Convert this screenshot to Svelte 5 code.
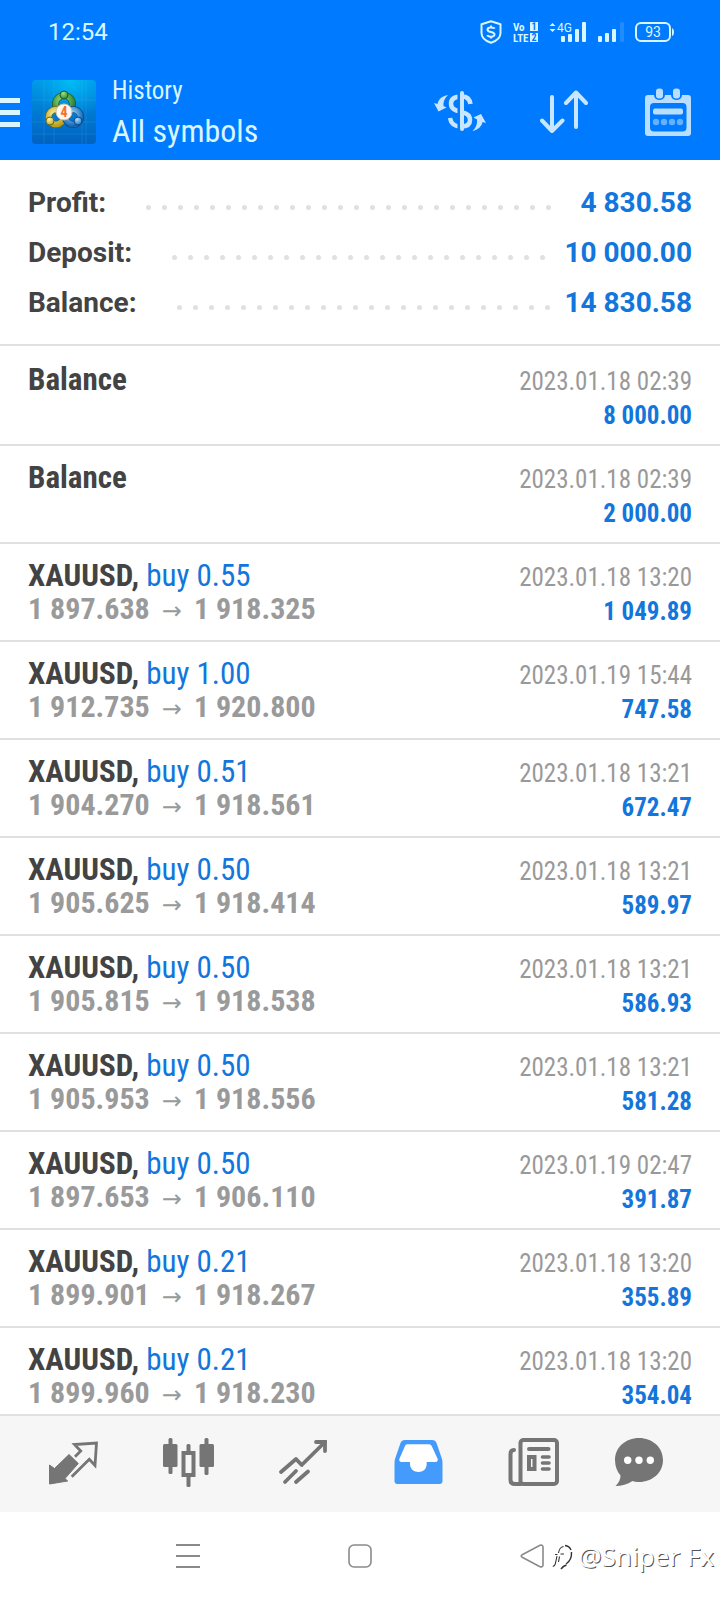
<script lang="ts">
  type Deal = {
    symbol?: string;
    side?: string;
    open?: string;
    close?: string;
    time: string;
    profit: string;
  };

  const summary = [
    { label: 'Profit:', value: '4 830.58' },
    { label: 'Deposit:', value: '10 000.00' },
    { label: 'Balance:', value: '14 830.58' },
  ];

  const deals: Deal[] = [
    { time: '2023.01.18 02:39', profit: '8 000.00' },
    { time: '2023.01.18 02:39', profit: '2 000.00' },
    { symbol: 'XAUUSD', side: 'buy 0.55', open: '1 897.638', close: '1 918.325', time: '2023.01.18 13:20', profit: '1 049.89' },
    { symbol: 'XAUUSD', side: 'buy 1.00', open: '1 912.735', close: '1 920.800', time: '2023.01.19 15:44', profit: '747.58' },
    { symbol: 'XAUUSD', side: 'buy 0.51', open: '1 904.270', close: '1 918.561', time: '2023.01.18 13:21', profit: '672.47' },
    { symbol: 'XAUUSD', side: 'buy 0.50', open: '1 905.625', close: '1 918.414', time: '2023.01.18 13:21', profit: '589.97' },
    { symbol: 'XAUUSD', side: 'buy 0.50', open: '1 905.815', close: '1 918.538', time: '2023.01.18 13:21', profit: '586.93' },
    { symbol: 'XAUUSD', side: 'buy 0.50', open: '1 905.953', close: '1 918.556', time: '2023.01.18 13:21', profit: '581.28' },
    { symbol: 'XAUUSD', side: 'buy 0.50', open: '1 897.653', close: '1 906.110', time: '2023.01.19 02:47', profit: '391.87' },
    { symbol: 'XAUUSD', side: 'buy 0.21', open: '1 899.901', close: '1 918.267', time: '2023.01.18 13:20', profit: '355.89' },
    { symbol: 'XAUUSD', side: 'buy 0.21', open: '1 899.960', close: '1 918.230', time: '2023.01.18 13:20', profit: '354.04' },
  ];

  // more than any row can hold; the extra ones wrap out of sight
  const dots = Array(60);
</script>

<div class="app">
  <header>
    <div class="status">
      <span class="clock">12:54</span>
      <div class="indicators">
        <svg width="22" height="24" viewBox="0 0 22 24">
          <path d="M11 1.2 L20.5 4.2 V13 C20.5 18 16.5 21 11 22.8 C5.5 21 1.5 18 1.5 13 V4.2 Z" fill="none" stroke="#d9f6ff" stroke-width="2" stroke-linejoin="round" />
          <path d="M14.5 8.8 C14 7.3 7.5 6.5 7.5 9.7 C7.5 12.7 14.5 11.3 14.5 14.5 C14.5 17.6 7.8 17 7.3 15 M11 5.5 V7.5 M11 16.5 V18.5" fill="none" stroke="#d9f6ff" stroke-width="2" />
        </svg>
        <svg class="volte" width="25" height="24" viewBox="0 0 25 24">
          <text x="0" y="11">Vo</text>
          <text x="0" y="22">LTE</text>
          <rect x="17" y="2" width="8" height="9" />
          <rect x="17" y="13" width="8" height="9" />
          <text class="cut" x="21" y="10" text-anchor="middle">1</text>
          <text class="cut" x="21" y="21" text-anchor="middle">2</text>
        </svg>
        <svg width="38" height="22" viewBox="0 0 38 22" fill="#d9f6ff">
          <path d="M0.5 5 L3.5 2 L6.5 5 Z M0.5 8 L3.5 11 L6.5 8 Z" />
          <text class="net" x="8" y="11">4G</text>
          <rect x="12" y="15" width="4" height="6" rx="1" />
          <rect x="19" y="13" width="4" height="8" rx="1" />
          <rect x="26" y="8" width="4" height="13" rx="1" />
          <rect x="33" y="1" width="4" height="20" rx="1" />
        </svg>
        <svg width="26" height="22" viewBox="0 0 26 22" fill="#d9f6ff">
          <rect x="0" y="15" width="4" height="6" rx="1" />
          <rect x="7" y="12" width="4" height="9" rx="1" />
          <rect x="14" y="8" width="4" height="13" rx="1" />
          <rect x="22" y="1" width="4" height="20" rx="1" opacity="0.15" />
        </svg>
        <svg width="39" height="22" viewBox="0 0 39 22">
          <rect x="1" y="2" width="34" height="18" rx="5" fill="none" stroke="#d9f6ff" stroke-width="2" />
          <path d="M37 7 Q39 8 39 11 Q39 14 37 15 Z" fill="#d9f6ff" />
          <text class="charge" x="18" y="16" text-anchor="middle">93</text>
        </svg>
      </div>
    </div>
    <div class="bar">
      <button class="menu" aria-label="Menu"><i></i><i></i><i></i></button>
      <svg class="logo" width="64" height="64" viewBox="0 0 64 64">
        <defs>
          <linearGradient id="sky" x1="0" y1="0" x2="0" y2="1">
            <stop offset="0" stop-color="#009be8" />
            <stop offset="0.5" stop-color="#007bd2" />
            <stop offset="1" stop-color="#0062c0" />
          </linearGradient>
          <radialGradient id="glow" cx="0.6" cy="0" r="0.6">
            <stop offset="0" stop-color="#00bff5" />
            <stop offset="1" stop-color="#00a0ec" stop-opacity="0" />
          </radialGradient>
          <radialGradient id="green" cx="0.4" cy="0.3" r="0.8">
            <stop offset="0" stop-color="#a5e07a" />
            <stop offset="1" stop-color="#1e7c33" />
          </radialGradient>
          <radialGradient id="yellow" cx="0.4" cy="0.3" r="0.8">
            <stop offset="0" stop-color="#fff3a0" />
            <stop offset="1" stop-color="#b8a01c" />
          </radialGradient>
          <radialGradient id="blue" cx="0.4" cy="0.3" r="0.8">
            <stop offset="0" stop-color="#a8ddff" />
            <stop offset="1" stop-color="#1467b4" />
          </radialGradient>
        </defs>
        <rect width="64" height="64" rx="4" fill="url(#sky)" />
        <rect width="64" height="64" rx="4" fill="url(#glow)" />
        <path d="M12 0 V64 M22 0 V64 M50 0 V64 M54 0 V64 M0 20 H64 M0 42 H64 M0 54 H64" stroke="#5fc4f5" stroke-opacity="0.18" />
        <g fill="none">
          <circle cx="32" cy="24" r="8.5" stroke="#17602f" stroke-width="7" />
          <circle cx="32" cy="24" r="8.5" stroke="url(#green)" stroke-width="5.5" />
          <circle cx="24" cy="37" r="7.5" stroke="#6b6a20" stroke-width="7" />
          <circle cx="24" cy="37" r="7.5" stroke="url(#yellow)" stroke-width="5.5" />
          <circle cx="41" cy="37" r="7.5" stroke="#0b4b8c" stroke-width="7" />
          <circle cx="41" cy="37" r="7.5" stroke="url(#blue)" stroke-width="5.5" />
        </g>
        <circle cx="32" cy="15" r="4" fill="url(#green)" stroke="#17602f" />
        <circle cx="18" cy="41" r="4" fill="url(#yellow)" stroke="#6b6a20" />
        <circle cx="46" cy="41" r="4" fill="url(#blue)" stroke="#0b4b8c" />
        <circle cx="32" cy="32" r="8" fill="#fff6ee" stroke="#c9c2a8" />
        <text class="four" x="32" y="37" text-anchor="middle">4</text>
      </svg>
      <div class="title">
        <span>History</span>
        <h1>All symbols</h1>
      </div>
      <div class="actions">
        <button aria-label="Symbols">
          <svg width="52" height="44" viewBox="0 0 52 44" fill="#c8e6ff">
            <path d="M36.5 14 C35.5 8 32 6.5 28 6.5 C20.5 6.5 17 9 17 13.5 C17 19.5 22 20.5 27 22 C33 23.5 36 25 36 30 C36 35 32 36.5 27 36.5 C21 36.5 17 34 16 28" fill="none" stroke="#c8e6ff" stroke-width="4.5" />
            <rect x="23.5" y="2" width="3" height="38" fill="#007aff" />
            <rect x="26" y="1" width="4" height="40" rx="2" />
            <path d="M0 13 L4.5 21.5 L12.5 17.5 L9.5 16 C9 12 10.5 8 14 5 C8 6 4.5 9 3.5 14 Z" />
            <path d="M39.5 27.5 L47 24 L52 33 L48.5 32 C48 36 44 40 38.5 41 C42 38 43.5 34 43 29.5 Z" />
          </svg>
        </button>
        <button aria-label="Sort">
          <svg width="48" height="44" viewBox="0 0 48 44" fill="none" stroke="#c8e6ff" stroke-width="4" stroke-linecap="round" stroke-linejoin="round">
            <path d="M12 7 V41 M2 30.5 L12 41 L22.5 30.5" />
            <path d="M36 37 V2.5 M26 13 L36 2.5 L46 13" />
          </svg>
        </button>
        <button aria-label="Period">
          <svg width="46" height="48" viewBox="0 0 46 48" fill="#b9deff">
            <rect x="0" y="7" width="46" height="41" rx="3" />
            <rect x="5" y="15" width="36.5" height="28.5" rx="4" fill="#007aff" />
            <rect x="9" y="-2" width="11" height="14" rx="5" fill="#007aff" />
            <rect x="26" y="-2" width="11" height="14" rx="5" fill="#007aff" />
            <rect x="11" y="0.5" width="7" height="10" rx="3" />
            <rect x="28" y="0.5" width="7" height="10" rx="3" />
            <rect x="8" y="20.5" width="30" height="6" rx="2" />
            <g opacity="0.55">
              <circle cx="11" cy="34" r="3.2" />
              <circle cx="19" cy="34" r="3.2" />
              <circle cx="27" cy="34" r="3.2" />
              <circle cx="35" cy="34" r="3.2" />
            </g>
          </svg>
        </button>
      </div>
    </div>
  </header>

  <main>
    <dl class="summary">
      {#each summary as row}
        <div>
          <dt>{row.label}</dt>
          <span class="dots" aria-hidden="true">{#each dots as _}<i></i>{/each}</span>
          <dd>{row.value}</dd>
        </div>
      {/each}
    </dl>

    <ul class="deals">
      {#each deals as deal}
        <li>
          <div class="left">
            {#if deal.symbol}
              <div class="name">{deal.symbol}, <span>{deal.side}</span></div>
              <div class="prices">{deal.open}<span class="arrow">→</span>{deal.close}</div>
            {:else}
              <div class="name">Balance</div>
            {/if}
          </div>
          <div class="right">
            <time>{deal.time}</time>
            <div class="profit">{deal.profit}</div>
          </div>
        </li>
      {/each}
    </ul>
  </main>

  <nav class="tabs">
    <button aria-label="Quotes">
      <svg width="52" height="52" viewBox="0 0 52 52">
        <path d="M2.5 27 L2.5 46 L20.7 43 L18 40.5 L31.3 25.5 L22 16.5 L7.5 30.5 Z" fill="#757575" stroke="#757575" stroke-linejoin="round" />
        <path d="M28 18.7 L33.7 13 L27.5 6.5 L49.5 5 L48 27.5 L42.3 21.3 L24.7 38.7" fill="none" stroke="#757575" stroke-width="2.8" />
      </svg>
    </button>
    <button aria-label="Charts">
      <svg width="52" height="52" viewBox="0 0 52 52" fill="#757575">
        <rect x="1" y="6" width="14.5" height="23" rx="1.5" />
        <rect x="6.5" y="0" width="4" height="36" rx="1.5" />
        <rect x="21.5" y="15" width="10" height="22" fill="none" stroke="#757575" stroke-width="4" />
        <rect x="24.5" y="6" width="4" height="9" rx="1.5" />
        <rect x="24.5" y="38" width="4" height="11" rx="1.5" />
        <rect x="37.5" y="6" width="14.5" height="23" rx="1.5" />
        <rect x="42.5" y="0" width="4" height="37" rx="1.5" />
      </svg>
    </button>
    <button aria-label="Trade">
      <svg width="52" height="52" viewBox="0 0 52 52" fill="none" stroke="#757575" stroke-width="3.8" stroke-linecap="round">
        <path d="M4 34 L19 21 L24.7 27 L48 4" stroke-linejoin="round" />
        <path d="M39 4 H48 V13" />
        <path d="M8 44 L19 33 M19 44 L31 33.5" />
      </svg>
    </button>
    <button aria-label="History">
      <svg width="52" height="52" viewBox="0 0 52 52">
        <path d="M13 2 H40 Q43.5 2 44.5 5 L50 21 Q50.5 23 50.5 25 V43 Q50.5 46 47.5 46 H5.5 Q2.5 46 2.5 43 V25 Q2.5 23 3 21 L8.5 5 Q9.5 2 13 2 Z" fill="#459bfb" />
        <path d="M15 6.3 H37 Q39 6.3 39.7 8 L45.7 21 Q46 24 43.5 24 H34.7 V26 C34.7 31 31 34 26.4 34 C22 34 18 31 18 26 V24 H9.5 Q7 24 7.3 21 L13 8 Q13.5 6.3 15 6.3 Z" fill="#fff" />
      </svg>
    </button>
    <button aria-label="News">
      <svg width="52" height="52" viewBox="0 0 52 52" fill="none" stroke="#757575" stroke-width="4" stroke-linecap="round">
        <rect x="13.5" y="2" width="36.5" height="44" rx="3" />
        <path d="M7 12 Q3.5 12 3.5 16 V42 Q3.5 46 8 46 H14" />
        <path d="M22 11 H41.5" />
        <rect x="22" y="19" width="5.5" height="12" />
        <path d="M35.5 19 H42 M35.5 25 H42 M35.5 31 H42" stroke-width="3.6" />
      </svg>
    </button>
    <button aria-label="Messages">
      <svg width="52" height="52" viewBox="0 0 52 52">
        <path d="M26 0 C39.5 0 50 9.5 50 22 C50 34.5 39.5 44 26 44 C23.5 44 21.5 43.6 19.5 43 C14.5 46.5 8.5 48 2.5 48 C6 45 7.5 41 7.5 37.5 C4 33.5 2 28 2 22 C2 9.5 12.5 0 26 0 Z" fill="#757575" />
        <g fill="#fff">
          <circle cx="14.7" cy="22.3" r="3.7" />
          <circle cx="26" cy="22.3" r="3.7" />
          <circle cx="37.3" cy="22.3" r="3.7" />
        </g>
      </svg>
    </button>
  </nav>

  <footer>
    <button aria-label="Recent apps">
      <svg width="26" height="26" viewBox="0 0 26 26" stroke="#8a8a8a" stroke-width="2">
        <path d="M1 2 H25 M1 13 H25 M1 24 H25" />
      </svg>
    </button>
    <button aria-label="Home">
      <svg width="26" height="26" viewBox="0 0 26 26" fill="none" stroke="#8a8a8a" stroke-width="1.6">
        <rect x="2" y="2" width="22" height="22" rx="5" />
      </svg>
    </button>
    <button aria-label="Back">
      <svg width="26" height="26" viewBox="0 0 26 26" fill="none" stroke="#8a8a8a" stroke-width="1.6">
        <path d="M3.2 11.8 L21 2.3 Q24 1.5 24 4 V22 Q24 24.5 21 23.7 L3.2 14.2 Q1.2 13 3.2 11.8 Z" />
      </svg>
    </button>
    <div class="watermark">
      <svg width="24" height="28" viewBox="0 0 24 28" fill="none" stroke="#333">
        <path d="M11.5 4.5 C7.5 5.5 7 8 6.500 11 M3 12.500 H5.500 M8.500 12 H12 M5 14 L3.500 21 Q3 24 0.800 24.500 M7.500 14.500 L6.500 20" stroke-width="1.1" />
        <path d="M13 3.500 Q17.500 4 19 8 M19.500 10 Q20 18 14 22 M14.500 23 Q11 24 9 27" stroke-width="1.4" />
      </svg>
      <span>@Sniper Fx</span>
    </div>
  </footer>
</div>

<style>
  :global(body) {
    margin: 0;
    background: #fff;
  }
  .app {
    display: flex;
    flex-direction: column;
    height: 100vh;
    font-family: 'Roboto Condensed', 'Liberation Sans Narrow', Roboto, sans-serif;
    color: #434343;
  }
  button {
    display: flex;
    align-items: center;
    justify-content: center;
    padding: 0;
    border: 0;
    background: none;
  }
  svg {
    display: block;
    flex: none;
  }
  header {
    flex: none;
    background: #007aff;
    color: #d9f6ff;
  }
  .status {
    display: flex;
    align-items: center;
    justify-content: space-between;
    height: 64px;
    padding: 0 46px 0 48px;
  }
  .clock {
    font: 24px/32px Roboto, sans-serif;
  }
  .indicators {
    display: flex;
    align-items: center;
    gap: 11px;
  }
  .volte {
    fill: #d9f6ff;
    font-size: 11px;
    font-weight: 700;
    overflow: visible;
  }
  .cut {
    fill: #007aff;
    font-size: 10px;
  }
  .net {
    font: 12px Roboto, sans-serif;
  }
  .charge {
    fill: #d9f6ff;
    font: 14px Roboto, sans-serif;
  }
  .bar {
    display: flex;
    align-items: center;
    height: 96px;
  }
  .menu {
    flex-direction: column;
    gap: 7px;
    width: 20px;
  }
  .menu i {
    width: 20px;
    height: 5px;
    background: #d9f6ff;
  }
  .logo {
    margin: 0 16px 0 12px;
  }
  .four {
    fill: #f07030;
    font-size: 14px;
    font-weight: 700;
  }
  .title {
    flex: 1;
    padding-top: 4px;
    font-size: 25px;
    line-height: 34px;
  }
  .title h1 {
    margin: 0;
    font-size: 32px;
    font-weight: 400;
    line-height: 46px;
  }
  .actions {
    display: flex;
  }
  .actions button {
    width: 104px;
    height: 96px;
  }
  main {
    flex: 1;
    min-height: 0;
    overflow: hidden;
  }
  .summary {
    margin: 0;
    padding: 17px 28px;
    border-bottom: 2px solid #e0e0e0;
    font-family: Roboto, sans-serif;
    font-size: 28px;
    font-weight: 700;
  }
  .summary div {
    display: flex;
    align-items: center;
    height: 50px;
  }
  .dots {
    flex: 1;
    display: flex;
    flex-wrap: wrap;
    height: 5px;
    margin: 10px 8px 0 35px;
    overflow: hidden;
  }
  .dots i {
    width: 5px;
    height: 5px;
    margin: 0 6px 0 5px;
    border-radius: 50%;
    background: #e0e0e0;
  }
  dd {
    margin: 0;
    color: #1276dc;
  }
  .deals {
    margin: 0;
    padding: 2px 0 0;
    list-style: none;
  }
  .deals li {
    display: flex;
    justify-content: space-between;
    box-sizing: border-box;
    height: 98px;
    padding: 15px 28px 0;
    border-bottom: 2px solid #e0e0e0;
  }
  .name,
  .prices {
    font-size: 31px;
    font-weight: 700;
    line-height: 34px;
  }
  .name span {
    color: #1276dc;
    font-weight: 400;
  }
  .prices {
    font-size: 30px;
    line-height: 32px;
    color: #9a9a9a;
  }
  .arrow {
    margin: 0 12px;
    font: 24px/24px 'Noto Sans', 'DejaVu Sans', sans-serif;
  }
  .right {
    padding-top: 2px;
    font-size: 25px;
    line-height: 34px;
    text-align: right;
  }
  time {
    color: #999;
  }
  .profit {
    color: #1276dc;
    font-weight: 700;
  }
  .tabs {
    flex: none;
    display: grid;
    grid-template-columns: repeat(5, 115fr) 97fr;
    padding: 0 33px 0 15px;
    height: 96px;
    border-top: 2px solid #e0e0e0;
    background: #f6f6f6;
  }
  footer {
    flex: none;
    position: relative;
    display: flex;
    justify-content: center;
    height: 88px;
  }
  footer button {
    width: 172px;
  }
  .watermark {
    position: absolute;
    right: 6px;
    top: 26px;
    display: flex;
    align-items: center;
    gap: 2px;
    color: #fff;
    font: 26px/36px 'Noto Sans', sans-serif;
    text-shadow: 1px 1px 0 #555;
  }
</style>
